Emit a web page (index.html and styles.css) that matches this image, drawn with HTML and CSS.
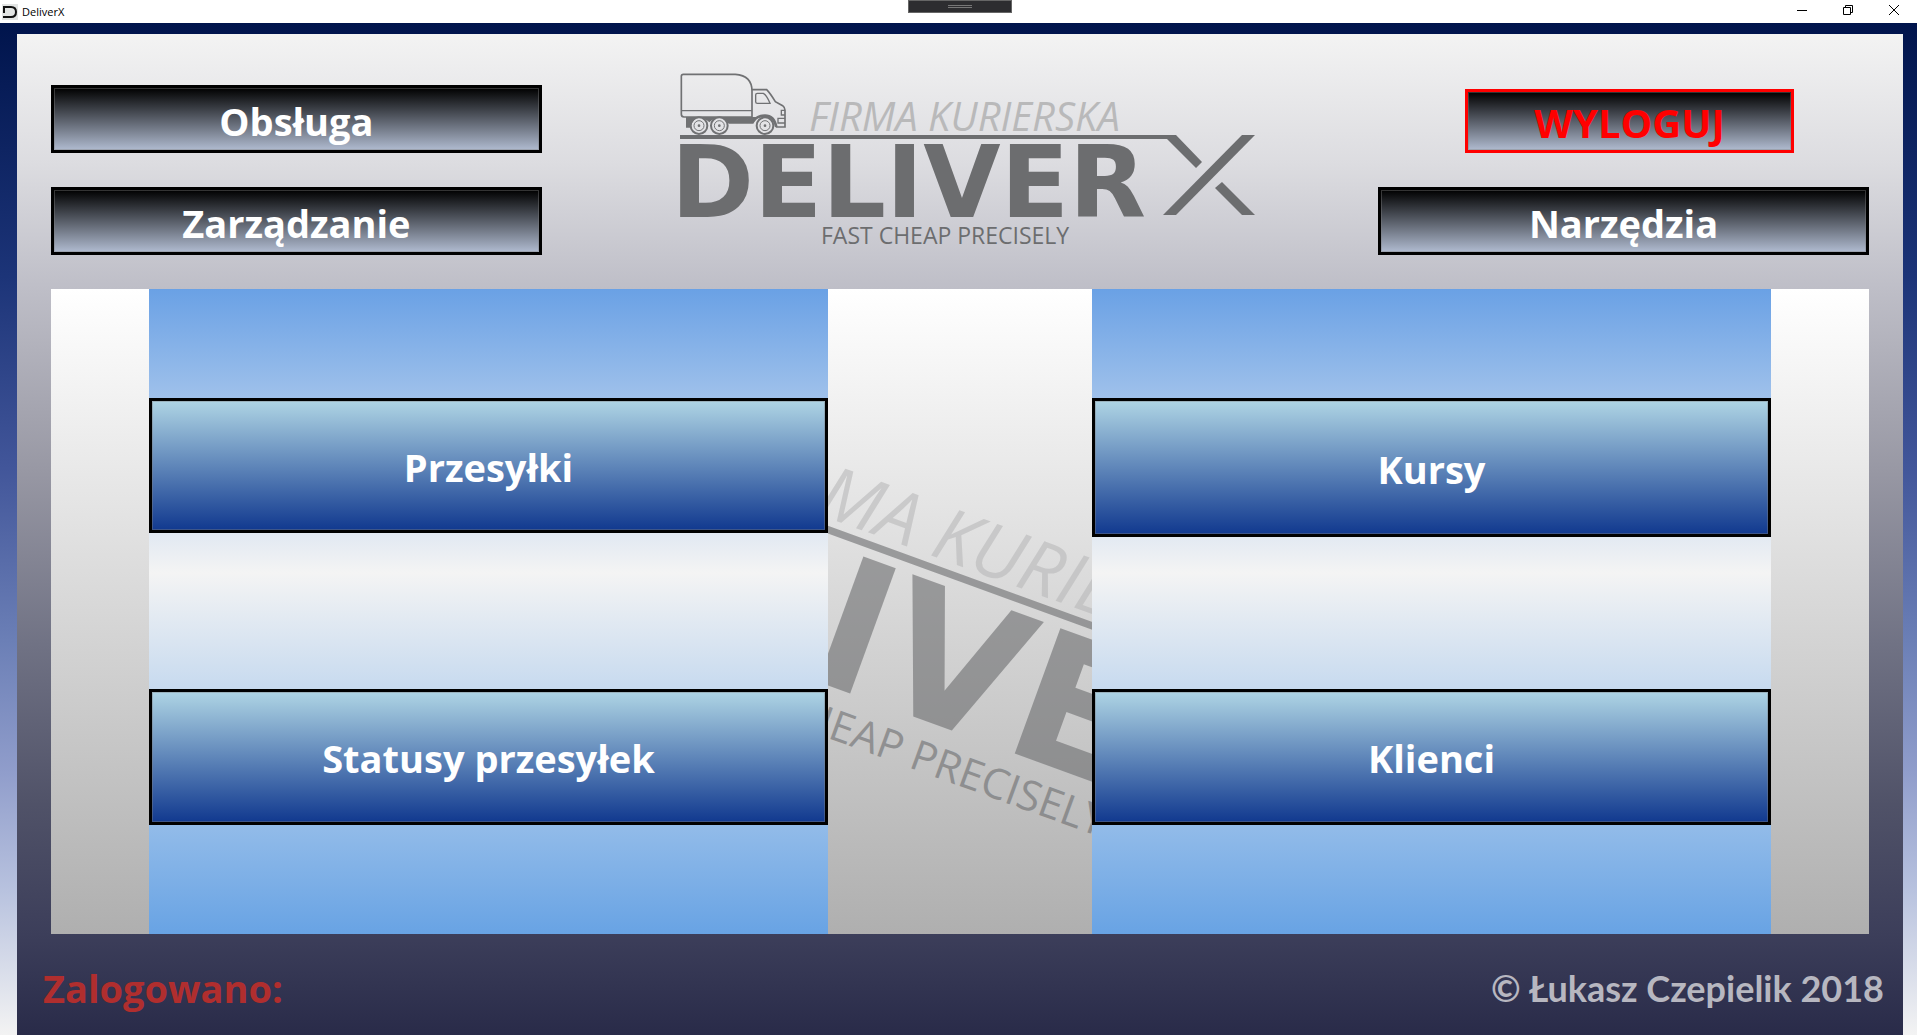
FILE: index.html
```html
<!DOCTYPE html>
<html lang="pl">
<head>
<meta charset="utf-8">
<meta name="viewport" content="width=device-width, initial-scale=1">
<title>DeliverX</title>
<link rel="stylesheet" href="styles.css">
</head>
<body>
<svg class="defs" width="0" height="0" aria-hidden="true">
  <symbol id="mark" viewBox="0 0 576 176">
    <g transform="scale(.33333) translate(-30 -24)" fill="none" stroke="#707173" stroke-width="5">
      <path d="M40 28H196Q246 32 246 78V156H42Q34 156 34 148V34Q34 28 40 28Z"/>
      <path d="M36 137H246" stroke-width="4"/>
      <path d="M48 156H250V176H232A26 26 0 0 0 48 176Z" fill="none" stroke="none"/>
      <path d="M48 156H262L250 176H176Q166 158 148 158Q130 158 118 172Q106 158 87 158Q70 158 60 188H48Z" fill="#707173" stroke="none"/>
      <path d="M246 74H290Q300 84 316 110L338 122Q345 127 345 136V186H318"/>
      <path d="M262 85H280Q290 90 300 115H262Q257 115 257 110V90Q257 85 262 85Z" stroke-width="4"/>
      <path d="M345 136H334V150H345M345 160H324V174H345" stroke-width="4"/>
      <path d="M250 168Q262 152 285 152Q312 152 319 186" stroke-width="8"/>
      <g stroke-width="6">
        <circle cx="87" cy="182" r="25"/><circle cx="148" cy="182" r="25"/><circle cx="285" cy="182" r="25"/>
      </g>
      <g stroke-width="3">
        <circle cx="87" cy="182" r="15"/><circle cx="148" cy="182" r="15"/><circle cx="285" cy="182" r="15"/>
      </g>
      <g fill="#707173" stroke="none">
        <circle cx="87" cy="182" r="4"/><circle cx="148" cy="182" r="4"/><circle cx="285" cy="182" r="4"/>
      </g>
    </g>
    <g fill="#6c6d6f">
      <path d="M0 62H496L522 89L516 95L487 66H0Z"/>
      <path d="M562 62H575L496 142H483Z"/>
      <path d="M542 109L575 142H562L535 115Z"/>
    </g>
  </symbol>
</svg>

<header class="titlebar">
  <svg class="app-icon" viewBox="0 0 16 16" aria-hidden="true"><rect width="16" height="16" fill="#e2e4e3"/><path d="M2 9V3H9Q14 3 14 8T9 13H1" fill="none" stroke="#111" stroke-width="2"/></svg>
  <span class="app-title">DeliverX</span>
  <div class="window-controls">
    <button type="button" aria-label="Minimalizuj"><svg viewBox="0 0 10 10"><path d="M0 5.5H10"/></svg></button>
    <button type="button" aria-label="Przywróć"><svg viewBox="0 0 10 10"><path d="M.5 2.5H7.500V9.500H.5ZM2.500 2.500V.5H9.500V7.500H7.500"/></svg></button>
    <button type="button" aria-label="Zamknij"><svg viewBox="0 0 10 10"><path d="M0 0L10 10M10 0L0 10"/></svg></button>
  </div>
  <div class="grip"></div>
</header>

<div class="window">
  <main class="frame">
    <div class="top">
      <nav class="menu">
        <button type="button" class="btn dark">Obsługa</button>
        <button type="button" class="btn dark">Zarządzanie</button>
      </nav>
      <svg class="logo" viewBox="0 0 576 176" role="img" aria-label="DeliverX">
        <use href="#mark"/>
        <text class="logo-firm" x="129" y="58">FIRMA KURIERSKA</text>
        <text class="logo-name" x="-9" y="144">DELIVER</text>
        <text class="logo-motto" x="141" y="171">FAST CHEAP PRECISELY</text>
      </svg>
      <nav class="menu right">
        <button type="button" class="btn dark logout">WYLOGUJ</button>
        <button type="button" class="btn dark">Narzędzia</button>
      </nav>
    </div>

    <section class="panel">
      <svg class="watermark" viewBox="0 0 576 176" aria-hidden="true">
        <use href="#mark"/>
        <text class="logo-firm" x="129" y="58">FIRMA KURIERSKA</text>
        <text class="logo-name" x="-9" y="144">DELIVER</text>
        <text class="logo-motto" x="141" y="171">FAST CHEAP PRECISELY</text>
      </svg>
      <div class="column first">
        <button type="button" class="btn blue">Przesyłki</button>
        <button type="button" class="btn blue lower">Statusy przesyłek</button>
      </div>
      <div class="column second">
        <button type="button" class="btn blue">Kursy</button>
        <button type="button" class="btn blue lower">Klienci</button>
      </div>
    </section>

    <footer class="footer">
      <span class="logged">Zalogowano:</span>
      <span class="author">© Łukasz Czepielik 2018</span>
    </footer>
  </main>
</div>
</body>
</html>
```
FILE: styles.css
```css
* { box-sizing: border-box; }

body {
  margin: 0;
  min-height: 100vh;
  display: flex;
  flex-direction: column;
  font-family: "Open Sans", "Noto Sans", sans-serif;
}

.defs { position: absolute; }

.titlebar {
  position: relative;
  display: flex;
  align-items: center;
  height: 23px;
  padding-left: 2px;
  background: #fff;
}

.app-icon { width: 16px; height: 16px; margin-right: 4px; }
.app-title { font-size: 11px; line-height: 16px; color: #000; }

.window-controls {
  display: flex;
  align-self: flex-start;
  margin-left: auto;
}

.window-controls button {
  display: flex;
  align-items: center;
  justify-content: center;
  width: 46px;
  height: 20px;
  padding: 0;
  border: 0;
  background: none;
}

.window-controls svg {
  width: 10px;
  height: 10px;
  fill: none;
  stroke: #000;
  stroke-width: 1;
}

.grip {
  position: absolute;
  top: 0;
  left: 50%;
  width: 104px;
  height: 13px;
  margin-left: -51px;
  border: 1px solid #666;
  background: linear-gradient(#777 1px, transparent 1px 2px, #777 2px) center / 24px 3px no-repeat #2d2d30;
}

.window {
  flex: 1;
  display: flex;
  padding: 11px 14px 0 17px;
  background: linear-gradient(#00144c, #1c3478 25%, #42569a 44%, #6b7fb6 61%, #909dcb 74%, #b9c3df 86%, #f3f3f3);
}

.frame {
  flex: 1;
  display: flex;
  flex-direction: column;
  padding: 39px 34px 0;
  background: linear-gradient(#f3f3f3, #dcdce0 13%, #bfbfc8 25%, #9797a3 44%, #707284 61%, #505268 77%, #3c3e5a 90%, #292b49);
}

.top {
  display: grid;
  grid-template-columns: 27fr 46fr 27fr;
  padding-bottom: 34px;
}

.menu {
  display: flex;
  flex-direction: column;
  gap: 34px;
  padding-top: 12px;
}

.btn {
  width: 100%;
  padding: 2px 0 0;
  border: 3px solid #000;
  box-shadow: inset 0 0 0 1px rgba(128, 128, 128, .4);
  color: #fff;
  font: bold 38px/48px "Open Sans", "Noto Sans", sans-serif;
}

.dark {
  height: 68px;
  padding-top: 4px;
  background: linear-gradient(#000, #b0bbd0);
}

.logout {
  align-self: flex-end;
  width: 67%;
  height: 64px;
  margin: 4px 75px 0 0;
  border-color: #f00;
  color: #f00;
  font-size: 40px;
}

.logo {
  width: 576px;
  max-width: 100%;
  height: 176px;
  justify-self: center;
  margin-left: 16px;
}

.logo-firm { font: italic 40px "Open Sans", sans-serif; fill: #b9b9ba; }
.logo-name { font: bold 100px "DejaVu Sans", sans-serif; fill: #6c6d6f; }
.logo-motto { font: 23px "Open Sans", sans-serif; fill: #6c6d6f; }

.panel {
  position: relative;
  flex: 1;
  display: grid;
  grid-template-columns: 98fr 679fr 264fr 679fr 98fr;
  overflow: hidden;
  background: linear-gradient(#fff, #afafaf);
}

.watermark {
  position: absolute;
  left: 51%;
  top: 53%;
  width: 58%;
  transform: translate(-50%, -50%) rotate(20deg);
  opacity: .6;
}

.column {
  position: relative;
  display: grid;
  background: linear-gradient(#6aa1e5, #f4f4f4 44%, #68a3e4);
}

.first { grid-column: 2; grid-template-rows: 109fr 135fr 156fr 136fr 109fr; }
.second { grid-column: 4; grid-template-rows: 109fr 139fr 152fr 136fr 109fr; }

.blue {
  grid-row: 2;
  background: linear-gradient(#aed4e4, #11398f);
}

.lower { grid-row: 4; }

.footer {
  display: flex;
  align-items: center;
  justify-content: space-between;
  height: 101px;
  margin: 0 -15px 0 -8px;
  padding-top: 6px;
  font-weight: bold;
  font-size: 38px;
  line-height: 48px;
}

.logged { color: #b02e2e; }
.author { color: #b7b7c0; font-family: "Lato", sans-serif; font-size: 36px; }
```
